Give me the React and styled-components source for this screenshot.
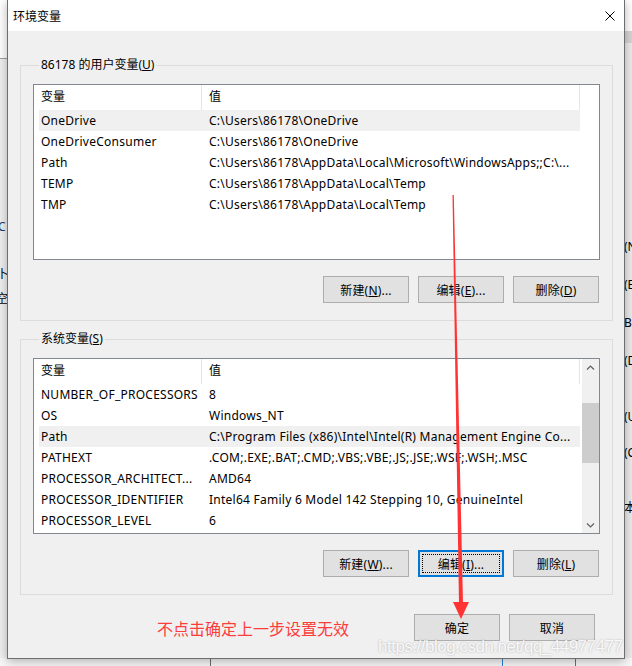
import styled, { createGlobalStyle } from "styled-components";

const GlobalStyle = createGlobalStyle`
  html, body {
    margin: 0;
    padding: 0;
  }
  body {
    font-family: "Noto Sans", "Noto Sans CJK SC", sans-serif;
    font-size: 12px;
    color: #000;
    background: #f0f0f0;
  }
`;

const Screen = styled.div`
  position: relative;
  width: 632px;
  height: 666px;
  overflow: hidden;
  box-sizing: border-box;
  padding-left: 7px;
  background: #f0f0f0;
`;

/* desktop behind the dialog */
const BackLeft = styled.div`
  position: absolute;
  left: 0;
  top: 0;
  width: 8px;
  height: 666px;
  background: linear-gradient(#ffffff 0 58px, #a0a0a0 58px 59px, #f0f0f0 59px);
`;

const BackRight = styled.div`
  position: absolute;
  right: 0;
  top: 0;
  width: 9px;
  height: 666px;
  background: linear-gradient(#ffffff 0 31px, #d6d6d6 31px 43px, #ececec 43px);
`;

const BackBottom = styled.div`
  position: absolute;
  left: 0;
  bottom: 0;
  width: 632px;
  height: 8px;
  background: #f7f7f7;
`;

const BackLine = styled.div`
  position: absolute;
  left: ${(p) => p.$x}px;
  bottom: 0;
  width: 1px;
  height: 8px;
  background: ${(p) => p.$color};
`;

const BackGlyph = styled.span`
  position: absolute;
  left: ${(p) => p.$x}px;
  top: ${(p) => p.$y}px;
  font-size: 12px;
  line-height: 16px;
  color: ${(p) => p.$color || "#000"};
  white-space: nowrap;
`;

const Dialog = styled.div`
  position: relative;
  z-index: 1;
  width: 618px;
  height: 659px;
  box-sizing: border-box;
  border: 1px solid #6e6e6e;
  border-top: none;
  background: #f0f0f0;
  box-shadow: 0 2px 10px rgba(0, 0, 0, 0.3);
  display: flex;
  flex-direction: column;
`;

const TitleBar = styled.div`
  height: 31px;
  flex: none;
  background: #ffffff;
  display: flex;
  align-items: center;
  justify-content: space-between;
  padding: 0 9px 0 5px;
`;

const Title = styled.span`
  font-size: 12px;
`;

const CloseIcon = styled.svg`
  width: 10px;
  height: 10px;
  display: block;
`;

const Body = styled.div`
  flex: 1;
  display: flex;
  flex-direction: column;
  padding: 34px 11px 0 12px;
`;

const GroupBox = styled.div`
  border: 1px solid #dcdcdc;
  display: flex;
  flex-direction: column;
  padding: 0 12px 17px 12px;
  margin-top: ${(p) => p.$gap || 0}px;
`;

const GroupTitle = styled.span`
  align-self: flex-start;
  margin: -9px 0 0 6px;
  padding: 0 2px;
  height: 16px;
  line-height: 16px;
  background: #f0f0f0;
`;

const ListBox = styled.div`
  margin-top: 11px;
  height: 176px;
  box-sizing: border-box;
  border: 1px solid #828790;
  background: #ffffff;
  display: flex;
  overflow: hidden;
`;

const ListMain = styled.div`
  width: 546px;
  flex: none;
  display: flex;
  flex-direction: column;
`;

const Header = styled.div`
  height: 25px;
  flex: none;
  display: grid;
  grid-template-columns: 168px 1fr;
`;

const HeaderCell = styled.div`
  padding-left: 7px;
  line-height: 24px;
  border-right: 1px solid #e5e5e5;
`;

const Row = styled.div`
  margin-left: 5px;
  height: 21px;
  flex: none;
  display: grid;
  grid-template-columns: 163px 1fr;
  background: ${(p) => (p.$selected ? "#f0f0f0" : "transparent")};
`;

const Cell = styled.div`
  padding-left: ${(p) => (p.$value ? 7 : 2)}px;
  line-height: 21px;
  letter-spacing: 0.25px;
  white-space: nowrap;
  overflow: hidden;
`;

const ScrollBar = styled.div`
  margin-left: auto;
  width: 17px;
  background: #f0f0f0;
  display: flex;
  flex-direction: column;
`;

const ScrollArrow = styled.div`
  height: 17px;
  flex: none;
  display: flex;
  align-items: center;
  justify-content: center;
`;

const ScrollThumb = styled.div`
  margin-top: 27px;
  height: 60px;
  background: #cdcdcd;
`;

const ScrollSpace = styled.div`
  flex: 1;
`;

const ButtonRow = styled.div`
  margin-top: 16px;
  display: flex;
  justify-content: flex-end;
  gap: 9px;
  padding-right: 1px;
`;

const Button = styled.button`
  position: relative;
  width: 86px;
  height: 27px;
  box-sizing: border-box;
  padding: 0;
  background: #e1e1e1;
  border: 1px solid ${(p) => (p.$focused ? "#0078d7" : "#adadad")};
  box-shadow: ${(p) => (p.$focused ? "inset 0 0 0 1px #0078d7" : "none")};
  font-family: inherit;
  font-size: 12px;
  letter-spacing: 0.2px;
  color: #000;

  &::after {
    content: "";
    display: ${(p) => (p.$focused ? "block" : "none")};
    position: absolute;
    inset: 3px;
    border: 1px dotted #000;
  }
`;

const Key = styled.span`
  text-decoration: underline;
`;

const Footer = styled.div`
  margin-top: 19px;
  display: flex;
  align-items: center;
  gap: 9px;
  padding-right: 18px;
`;

const Note = styled.span`
  flex: 1;
  padding-left: 137px;
  font-size: 16px;
  color: #fd3c3c;
`;

const Overlay = styled.svg`
  position: absolute;
  left: 0;
  top: 0;
  z-index: 2;
  pointer-events: none;
`;

const Watermark = styled.span`
  position: absolute;
  z-index: 2;
  left: 378px;
  top: 637px;
  font-family: "Liberation Sans", Arial, sans-serif;
  font-size: 17px;
  letter-spacing: -0.5px;
  color: rgba(255, 255, 255, 0.9);
  text-shadow: 0 0 2px rgba(90, 90, 90, 0.45);
  white-space: nowrap;
`;

const userVars = [
  ["OneDrive", "C:\\Users\\86178\\OneDrive", true],
  ["OneDriveConsumer", "C:\\Users\\86178\\OneDrive"],
  ["Path", "C:\\Users\\86178\\AppData\\Local\\Microsoft\\WindowsApps;;C:\\..."],
  ["TEMP", "C:\\Users\\86178\\AppData\\Local\\Temp"],
  ["TMP", "C:\\Users\\86178\\AppData\\Local\\Temp"],
];

const sysVars = [
  ["NUMBER_OF_PROCESSORS", "8"],
  ["OS", "Windows_NT"],
  ["Path", "C:\\Program Files (x86)\\Intel\\Intel(R) Management Engine Co...", true],
  ["PATHEXT", ".COM;.EXE;.BAT;.CMD;.VBS;.VBE;.JS;.JSE;.WSF;.WSH;.MSC"],
  ["PROCESSOR_ARCHITECT...", "AMD64"],
  ["PROCESSOR_IDENTIFIER", "Intel64 Family 6 Model 142 Stepping 10, GenuineIntel"],
  ["PROCESSOR_LEVEL", "6"],
];

const Chevron = ({ down }) => (
  <svg width="9" height="6" viewBox="0 0 9 6">
    <polyline
      points={down ? "1,1.5 4.5,5 8,1.5" : "1,4.5 4.5,1 8,4.5"}
      fill="none"
      stroke="#606060"
      strokeWidth="1.2"
    />
  </svg>
);

const VarList = ({ rows, scroll }) => (
  <ListBox>
    <ListMain>
      <Header>
        <HeaderCell>变量</HeaderCell>
        <HeaderCell>值</HeaderCell>
      </Header>
      {rows.map(([name, value, sel]) => (
        <Row key={name + value} $selected={sel}>
          <Cell>{name}</Cell>
          <Cell $value>{value}</Cell>
        </Row>
      ))}
    </ListMain>
    {scroll && (
      <ScrollBar>
        <ScrollArrow>
          <Chevron />
        </ScrollArrow>
        <ScrollThumb />
        <ScrollSpace />
        <ScrollArrow>
          <Chevron down />
        </ScrollArrow>
      </ScrollBar>
    )}
  </ListBox>
);

export default function App() {
  return (
    <>
      <GlobalStyle />
      <Screen>
        <BackLeft>
          <BackGlyph $x={-2} $y={219} $color="#1f3b70">C</BackGlyph>
          <BackGlyph $x={-3} $y={266}>卜</BackGlyph>
          <BackGlyph $x={-4} $y={291}>空</BackGlyph>
        </BackLeft>
        <BackRight>
          <BackGlyph $x={1} $y={239}>(N</BackGlyph>
          <BackGlyph $x={1} $y={277}>(E</BackGlyph>
          <BackGlyph $x={1} $y={315}>B</BackGlyph>
          <BackGlyph $x={1} $y={353}>(D</BackGlyph>
          <BackGlyph $x={1} $y={409}>(U</BackGlyph>
          <BackGlyph $x={1} $y={445}>(C</BackGlyph>
          <BackGlyph $x={1} $y={500}>本</BackGlyph>
        </BackRight>
        <BackBottom>
          <BackLine $x={210} $color="#6e6e6e" />
          <BackLine $x={502} $color="#2a7fd4" />
          <BackLine $x={575} $color="#2a7fd4" />
        </BackBottom>

        <Dialog>
          <TitleBar>
            <Title>环境变量</Title>
            <CloseIcon viewBox="0 0 10 10">
              <path d="M0.5 0.5 L9.5 9.5 M9.5 0.5 L0.5 9.5" stroke="#000" strokeWidth="1" />
            </CloseIcon>
          </TitleBar>
          <Body>
            <GroupBox>
              <GroupTitle>
                86178 的用户变量(<Key>U</Key>)
              </GroupTitle>
              <VarList rows={userVars} />
              <ButtonRow>
                <Button>
                  新建(<Key>N</Key>)...
                </Button>
                <Button>
                  编辑(<Key>E</Key>)...
                </Button>
                <Button>
                  删除(<Key>D</Key>)
                </Button>
              </ButtonRow>
            </GroupBox>

            <GroupBox $gap={18}>
              <GroupTitle>
                系统变量(<Key>S</Key>)
              </GroupTitle>
              <VarList rows={sysVars} scroll />
              <ButtonRow>
                <Button>
                  新建(<Key>W</Key>)...
                </Button>
                <Button $focused>
                  编辑(<Key>I</Key>)...
                </Button>
                <Button>
                  删除(<Key>L</Key>)
                </Button>
              </ButtonRow>
            </GroupBox>

            <Footer>
              <Note>不点击确定上一步设置无效</Note>
              <Button>确定</Button>
              <Button>取消</Button>
            </Footer>
          </Body>
        </Dialog>

        <Overlay width="632" height="666" viewBox="0 0 632 666">
          <polygon points="452.5,195 453.8,195 463,604 459,604" fill="#ff3333" />
          <polygon points="453,602 469,602 461,619" fill="#ff3333" />
        </Overlay>
        <Watermark>https://blog.csdn.net/qq_44977477</Watermark>
      </Screen>
    </>
  );
}
